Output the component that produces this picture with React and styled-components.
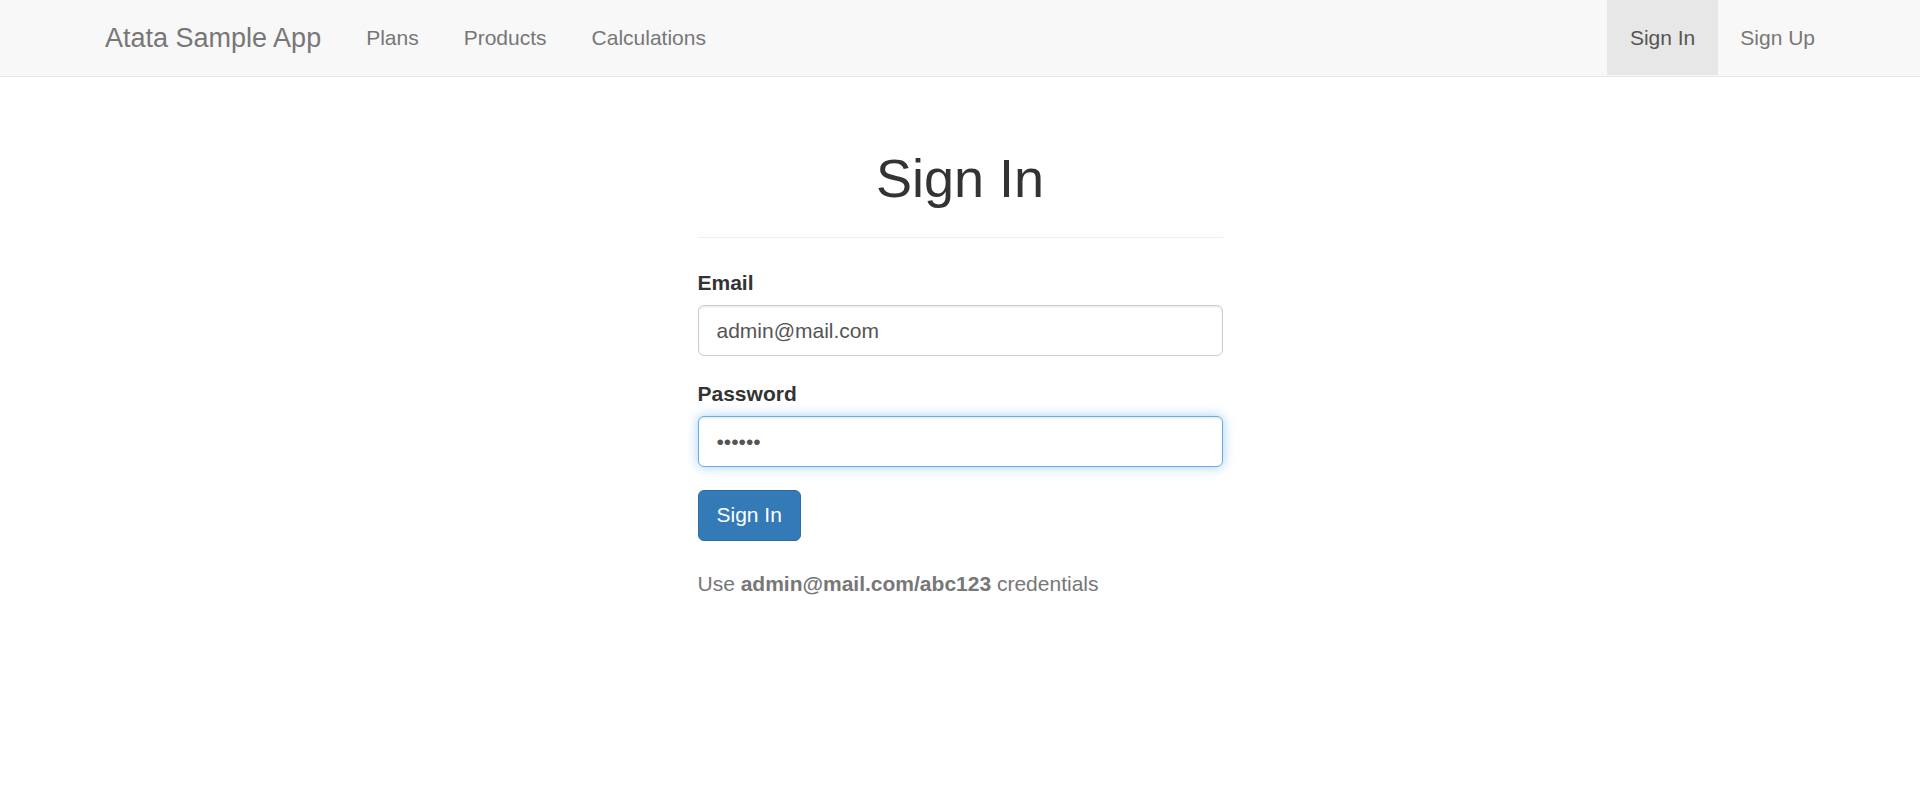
import React from 'react';
import styled, { createGlobalStyle } from 'styled-components';

const GlobalStyle = createGlobalStyle`
  html, body {
    margin: 0;
    padding: 0;
    background: #fff;
  }
  body {
    font-family: "Liberation Sans", Arial, sans-serif;
    font-size: 21px;
    line-height: 30px;
    color: #333;
  }
  * { box-sizing: border-box; }
`;

const Navbar = styled.nav`
  background-color: #f8f8f8;
  border-bottom: 1.5px solid #e7e7e7;
  height: 76.5px;
`;

const NavContainer = styled.div`
  width: 1755px;
  margin: 0 auto;
  padding: 0 22.5px;
  display: flex;
  align-items: stretch;
  height: 75px;
`;

const Brand = styled.a`
  margin-left: -22.5px;
  padding: 22.5px;
  font-size: 27px;
  line-height: 30px;
  color: #777;
  text-decoration: none;
`;

const NavList = styled.ul`
  display: flex;
  list-style: none;
  margin: 0;
  padding: 0;
  margin-right: ${p => (p.right ? '-22.5px' : '0')};
  margin-left: ${p => (p.right ? 'auto' : '0')};
`;

const NavLink = styled.a`
  display: block;
  padding: 22.5px;
  line-height: 30px;
  font-size: 21px;
  text-decoration: none;
  color: ${p => (p.active ? '#555' : '#777')};
  background-color: ${p => (p.active ? '#e7e7e7' : 'transparent')};
`;

const Content = styled.main`
  width: 525px;
  margin: 0 auto;
  padding-top: 42px;
`;

const Title = styled.h1`
  margin: 30px 0 0;
  font-size: 54px;
  line-height: 59.4px;
  font-weight: 500;
  color: #333;
  text-align: center;
`;

const Rule = styled.hr`
  margin: 29px 0 30px;
  border: 0;
  border-top: 1.5px solid #eee;
`;

const FormGroup = styled.div`
  margin-bottom: 22.5px;
`;

const Label = styled.label`
  display: block;
  margin-bottom: 7.5px;
  font-weight: 700;
  color: #333;
`;

const Input = styled.input`
  display: block;
  width: 100%;
  height: 51px;
  padding: 9px 18px;
  font-family: inherit;
  font-size: 21px;
  line-height: 30px;
  color: #555;
  background: #fff;
  border: 1.5px solid ${p => (p.focused ? '#66afe9' : '#ccc')};
  border-radius: 6px;
  outline: none;
  box-shadow: ${p =>
    p.focused
      ? 'inset 0 1.5px 1.5px rgba(0,0,0,.075), 0 0 12px rgba(102,175,233,.6)'
      : 'inset 0 1.5px 1.5px rgba(0,0,0,.075)'};
`;

const Button = styled.button`
  display: inline-block;
  height: 51px;
  padding: 9px 18px;
  font-family: inherit;
  font-size: 21px;
  line-height: 30px;
  color: #fff;
  background-color: #337ab7;
  border: 1.5px solid #2e6da4;
  border-radius: 6px;
  cursor: pointer;
`;

const Hint = styled.p`
  margin: 28px 0 0;
  color: #777;

  b {
    font-weight: 700;
  }
`;

export default function App() {
  return (
    <>
      <GlobalStyle />
      <Navbar>
        <NavContainer>
          <Brand href="#">Atata Sample App</Brand>
          <NavList>
            <li><NavLink href="#">Plans</NavLink></li>
            <li><NavLink href="#">Products</NavLink></li>
            <li><NavLink href="#">Calculations</NavLink></li>
          </NavList>
          <NavList right>
            <li><NavLink href="#" active>Sign In</NavLink></li>
            <li><NavLink href="#">Sign Up</NavLink></li>
          </NavList>
        </NavContainer>
      </Navbar>
      <Content>
        <Title>Sign In</Title>
        <Rule />
        <form onSubmit={e => e.preventDefault()}>
          <FormGroup>
            <Label htmlFor="email">Email</Label>
            <Input id="email" type="email" defaultValue="admin@mail.com" />
          </FormGroup>
          <FormGroup>
            <Label htmlFor="password">Password</Label>
            <Input id="password" type="password" defaultValue="abc123" focused />
          </FormGroup>
          <Button type="submit">Sign In</Button>
        </form>
        <Hint>
          Use <b>admin@mail.com/abc123</b> credentials
        </Hint>
      </Content>
    </>
  );
}
